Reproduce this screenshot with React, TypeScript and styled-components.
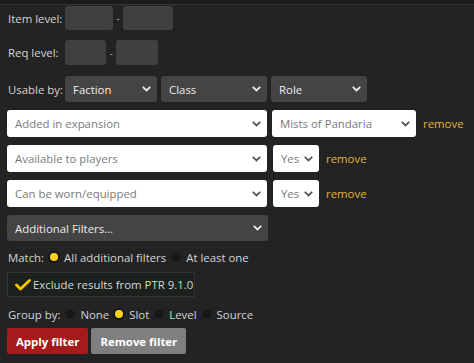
import React from 'react';
import styled, { createGlobalStyle } from 'styled-components';

const GlobalStyle = createGlobalStyle`
  html, body {
    margin: 0;
    padding: 0;
    background: #232323;
  }
  body {
    font-family: "Open Sans", "Liberation Sans", sans-serif;
    font-size: 11.4px;
    color: #d4d4d4;
  }
`;

const Page = styled.div`
  width: 474px;
  height: 363px;
  overflow: hidden;
  background: #232323;
  border-top: 4px solid #1b1b1b;
  box-sizing: border-box;
`;

const TopLine = styled.div`
  height: 1px;
  background: #363636;
`;

const Form = styled.div`
  display: flex;
  flex-direction: column;
  padding: 1px 0 0 7px;
`;

const Row = styled.div<{ $mt?: number; $h?: number }>`
  display: flex;
  align-items: center;
  height: ${p => p.$h ?? 27}px;
  margin-top: ${p => p.$mt ?? 0}px;
`;

const Label = styled.span`
  width: 58px;
  flex: none;
  padding-left: 1px;
  box-sizing: border-box;
  color: #d4d4d4;
  white-space: nowrap;
`;

const NumBox = styled.div<{ $w: number }>`
  width: ${p => p.$w}px;
  flex: none;
  height: 100%;
  background: #404040;
  border-radius: 3px;
`;

const Dash = styled.span`
  width: 10px;
  text-align: center;
  color: #aaa;
  font-size: 10px;
`;

const SelectBox = styled.div<{ $w: number; $light?: boolean; $ml?: number }>`
  width: ${p => p.$w}px;
  flex: none;
  height: 100%;
  margin-left: ${p => p.$ml ?? 0}px;
  box-sizing: border-box;
  display: flex;
  align-items: center;
  justify-content: space-between;
  padding: 0 6px 0 8px;
  border-radius: 3px;
  background: ${p => (p.$light ? '#ffffff' : '#444444')};
  color: ${p => (p.$light ? '#7a7a7a' : '#ececec')};
  white-space: nowrap;
  overflow: hidden;
`;

const Chevron = ({ color }: { color: string }) => (
  <svg width="9" height="6" viewBox="0 0 9 6" style={{ flex: 'none' }}>
    <path d="M1.3 1.3 L4.5 4.5 L7.7 1.3" fill="none" stroke={color} strokeWidth="1.8" strokeLinecap="round" />
  </svg>
);

const Remove = styled.a`
  margin-left: 7px;
  color: #e2b43c;
  cursor: pointer;
`;

const Radio = styled.span<{ $on?: boolean }>`
  width: 12px;
  height: 12px;
  border-radius: 50%;
  box-sizing: border-box;
  background: ${p => (p.$on ? '#ffd21a' : '#171717')};
  border: ${p => (p.$on ? '2.5px solid #161616' : '1px solid #2a2a2a')};
  margin: 0 4px;
  flex: none;
`;

const Option = styled.span<{ $first?: boolean }>`
  color: #d4d4d4;
  white-space: nowrap;
  padding-left: ${p => (p.$first ? 1 : 0)}px;
`;

const CheckBox = styled.div`
  width: 188px;
  height: 25px;
  margin-top: 3px;
  box-sizing: border-box;
  display: flex;
  align-items: center;
  padding-left: 6px;
  background: #1c211e;
  border: 1px solid #333;
  color: #d8d8d8;
  white-space: nowrap;
`;

const Tick = styled.svg`
  flex: none;
  margin-right: 1px;
`;

const Button = styled.button<{ $red?: boolean }>`
  height: 26px;
  border: none;
  border-radius: 2px;
  padding: 0 9px;
  font-family: "Open Sans", "Liberation Sans", sans-serif;
  font-size: 11.4px;
  font-weight: 700;
  color: #ffffff;
  background: ${p => (p.$red ? '#a51a1a' : '#7f7f7f')};
  margin-right: 3px;
`;

export default function App() {
  return (
    <Page>
      <GlobalStyle />
      <TopLine />
      <Form>
        <Row $h={24}>
          <Label>Item level:</Label>
          <NumBox $w={48} />
          <Dash>-</Dash>
          <NumBox $w={50} />
        </Row>
        <Row $h={25} $mt={10}>
          <Label>Req level:</Label>
          <NumBox $w={41} />
          <Dash>-</Dash>
          <NumBox $w={42} />
        </Row>
        <Row $h={26} $mt={11}>
          <Label>Usable by:</Label>
          <SelectBox $w={92}>Faction<Chevron color="#eee" /></SelectBox>
          <SelectBox $w={106} $ml={4}>Class<Chevron color="#eee" /></SelectBox>
          <SelectBox $w={96} $ml={4}>Role<Chevron color="#eee" /></SelectBox>
        </Row>
        <Row $mt={8}>
          <SelectBox $w={260} $light>Added in expansion<Chevron color="#555" /></SelectBox>
          <SelectBox $w={144} $ml={5} $light>Mists of Pandaria<Chevron color="#555" /></SelectBox>
          <Remove>remove</Remove>
        </Row>
        <Row $mt={8}>
          <SelectBox $w={260} $light>Available to players<Chevron color="#555" /></SelectBox>
          <SelectBox $w={46} $ml={6} $light>Yes<Chevron color="#555" /></SelectBox>
          <Remove>remove</Remove>
        </Row>
        <Row $mt={8}>
          <SelectBox $w={260} $light>Can be worn/equipped<Chevron color="#555" /></SelectBox>
          <SelectBox $w={46} $ml={6} $light>Yes<Chevron color="#555" /></SelectBox>
          <Remove>remove</Remove>
        </Row>
        <Row $mt={8} $h={26}>
          <SelectBox $w={261}>Additional Filters...<Chevron color="#eee" /></SelectBox>
        </Row>
        <Row $mt={4} $h={24}>
          <Option $first>Match:</Option>
          <Radio $on />
          <Option>All additional filters</Option>
          <Radio />
          <Option>At least one</Option>
        </Row>
        <CheckBox>
          <Tick width="18" height="14" viewBox="0 0 18 14">
            <path d="M2.5 7 L6.5 11 L15.5 2.5" fill="none" stroke="#f2c200" strokeWidth="3" strokeLinecap="round" strokeLinejoin="round" />
          </Tick>
          Exclude results from PTR 9.1.0
        </CheckBox>
        <Row $mt={5} $h={24}>
          <Option $first>Group by:</Option>
          <Radio />
          <Option>None</Option>
          <Radio $on />
          <Option>Slot</Option>
          <Radio />
          <Option>Level</Option>
          <Radio />
          <Option>Source</Option>
        </Row>
        <Row $mt={2} $h={26}>
          <Button $red>Apply filter</Button>
          <Button>Remove filter</Button>
        </Row>
      </Form>
    </Page>
  );
}
